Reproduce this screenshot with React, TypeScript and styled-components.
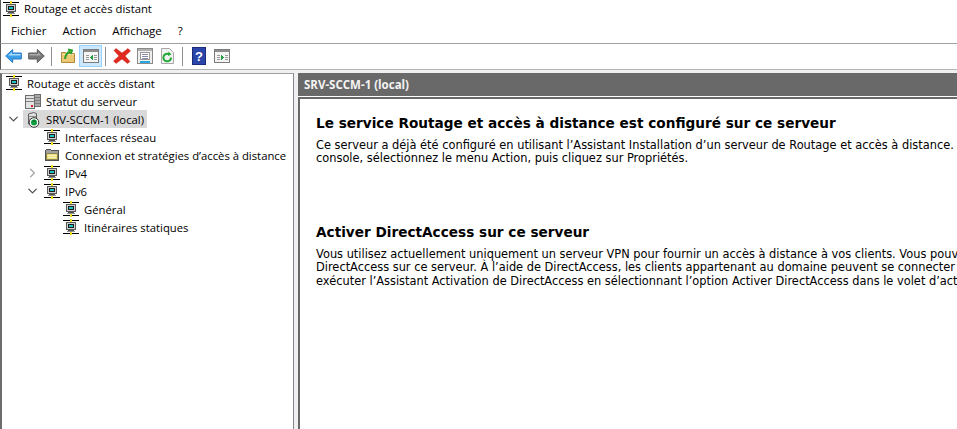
import React from 'react'
import styled, { createGlobalStyle } from 'styled-components'
import { ChevronDown, ChevronRight } from 'lucide-react'

const GlobalStyle = createGlobalStyle`
  html, body {
    margin: 0;
    padding: 0;
    background: #f0f0f0;
  }
  body {
    font-family: 'Open Sans', 'Noto Sans', sans-serif;
    color: #000;
    overflow: hidden;
  }
`

function NetworkIcon() {
  return (
    <svg width="16" height="16" viewBox="0 0 16 16" shapeRendering="crispEdges">
      <rect x="0" y="1" width="16" height="1" fill="#000" />
      <rect x="7" y="0" width="2" height="3" fill="#f0e020" />
      <rect x="3" y="3" width="10" height="8" fill="#d0d0d0" />
      <path d="M3.500 3.500h9v7h-9z" fill="none" stroke="#585858" />
      <path d="M5.500 5.500h5v3h-5z" fill="#20c4c4" stroke="#1c1c1c" />
      <rect x="5" y="11" width="6" height="1" fill="#505050" />
      <rect x="4" y="12" width="8" height="1" fill="#909090" />
      <rect x="0" y="14" width="16" height="1" fill="#000" />
      <rect x="7" y="13" width="2" height="3" fill="#f0e020" />
    </svg>
  )
}

function ServerStatusIcon() {
  return (
    <svg width="16" height="17" viewBox="0 0 16 17" shapeRendering="crispEdges">
      <path d="M0.500 2.500h9v13h-9z" fill="#e2e2e2" stroke="#6c6c6c" />
      <path d="M9.500 1.500h6v12h-6z" fill="#a8a8a8" stroke="#6c6c6c" />
      <path d="M1 5.500h8M1 8.500h8M10 4.500h5M10 7.500h5M10 10.500h5" stroke="#808080" />
      <rect x="6" y="12" width="2" height="2" fill="#d02020" />
    </svg>
  )
}

function LocalServerIcon() {
  return (
    <svg width="16" height="17" viewBox="0 0 16 17">
      <path d="M3.500 3l5-1.500 3 1V13h-8z" fill="#dedede" stroke="#606060" />
      <path d="M4 5.500h7M4 8h3" stroke="#8c8c8c" />
      <circle cx="9" cy="11.500" r="4.800" fill="#fff" stroke="#303030" />
      <circle cx="9" cy="11.500" r="3" fill="#0ea040" />
      <path d="M9 8.300l2.200 2.500H6.800z" fill="#0a7a30" />
    </svg>
  )
}

function FolderIcon() {
  return (
    <svg width="16" height="16" viewBox="0 0 16 16" shapeRendering="crispEdges">
      <path d="M1.500 3.500l1-1h4l1 1h7v10h-13z" fill="#a0a0a0" stroke="#505050" />
      <path d="M2.500 6.500h11v6h-11z" fill="#ece080" stroke="#8a8450" />
      <path d="M4 8.500h8M4 10.500h8" stroke="#f8f2c0" />
    </svg>
  )
}

function BackIcon() {
  return (
    <svg width="17" height="16" viewBox="0 0 17 16">
      <path d="M0.700 8l7-6.500V5h8.600v6H7.700v3.500z" fill="#3a9fe8" stroke="#2a78c0" />
      <path d="M3 7.500l4-3.500V6h8.500v1.500z" fill="#a8dcfa" />
    </svg>
  )
}

function ForwardIcon() {
  return (
    <svg width="17" height="16" viewBox="0 0 17 16">
      <path d="M16.300 8l-7-6.500V5H0.700v6h8.600v3.500z" fill="#787878" stroke="#5c5c5c" />
      <path d="M1.500 6h8.500V4l3 3.500H1.500z" fill="#acacac" />
    </svg>
  )
}

function UpFolderIcon() {
  return (
    <svg width="16" height="16" viewBox="0 0 16 16">
      <path d="M1.500 4.500h4l1 1h8v9h-13z" fill="#ecc873" stroke="#b08a3c" />
      <path d="M2 6.500h12" stroke="#f8e4ac" />
      <path d="M5 11C5.500 6.500 7.500 4.500 10 3.500M8 1.500L12 2.500l-1.500 3.500" fill="none" stroke="#2aa02a" strokeWidth="2" />
    </svg>
  )
}

function PaneIcon({ arrow }: { arrow: 'left' | 'right' }) {
  return (
    <svg width="16" height="16" viewBox="0 0 16 16" shapeRendering="crispEdges">
      <rect x="0.500" y="1.500" width="15" height="13" fill="#f4f4f4" stroke="#7c7c7c" />
      <rect x="1" y="2" width="14" height="2" fill="#8c8c8c" />
      <path d="M3 7h3M3 9h3M3 11h3M11 7h3M11 9h3M11 11h3" stroke="#9a9a9a" />
      {arrow === 'left' ? (
        <path d="M10 6v7L7 9.500z" fill="#20a040" />
      ) : (
        <path d="M7 6v7l3-3.500z" fill="#20a040" />
      )}
    </svg>
  )
}

function DeleteIcon() {
  return (
    <svg width="18" height="16" viewBox="0 0 18 16">
      <path d="M3 0.500l6 4.500 6-4.500 2.500 2.500-5.500 5 5 5.500-2.500 2-5.500-4.500-6 4.500-2.500-2.500 5.500-5-5-5.500z" fill="#e02a20" stroke="#c8241c" strokeWidth="0.500" />
    </svg>
  )
}

function PropertiesIcon() {
  return (
    <svg width="16" height="16" viewBox="0 0 16 16" shapeRendering="crispEdges">
      <rect x="0.500" y="0.500" width="15" height="15" fill="#eee" stroke="#8a8a8a" />
      <rect x="1" y="1" width="14" height="2" fill="#b0b0b0" />
      <rect x="3.500" y="4.500" width="9" height="7" fill="#fff" stroke="#9a9a9a" />
      <path d="M5 6.500h6M5 8.500h6M5 10.500h6" stroke="#8888aa" />
      <rect x="3" y="13" width="10" height="2" fill="#28a8e0" />
    </svg>
  )
}

function RefreshIcon() {
  return (
    <svg width="15" height="16" viewBox="0 0 15 16">
      <path d="M1.500 0.500h8l4 4v11h-12z" fill="#f2f2f2" stroke="#a8a8a8" />
      <path d="M11 9.500a3.800 3.800 0 1 1-1.800-3.200" fill="none" stroke="#22a838" strokeWidth="2" />
      <path d="M8.500 3.500l3 3-3.500 1.500z" fill="#22a838" />
    </svg>
  )
}

function HelpIcon() {
  return (
    <svg width="14" height="18" viewBox="0 0 14 18">
      <rect x="0.500" y="0.500" width="13" height="17" fill="#2c45a8" stroke="#1c2c78" />
      <text x="7" y="14" textAnchor="middle" fontSize="13" fontWeight="700" fontFamily="'Liberation Sans', sans-serif" fill="#fff">?</text>
    </svg>
  )
}

const Window = styled.div`
  width: 957px;
  height: 429px;
  display: flex;
  flex-direction: column;
  overflow: hidden;
  background: #f0f0f0;
`

const TitleBar = styled.div`
  height: 20px;
  background: #fff;
  border-left: 1px solid #5a5a5a;
  display: flex;
  align-items: center;
  gap: 5px;
  padding: 0 0 3px 2px;
  box-sizing: border-box;
  font-size: 11.3px;
`

const MenuBar = styled.div`
  height: 21px;
  background: #fff;
  border-left: 1px solid #5a5a5a;
  border-bottom: 1px solid #a0a0a0;
  display: flex;
  align-items: center;
  gap: 16px;
  padding: 0 0 2px 10px;
  font-size: 11.5px;
`

const MenuItem = styled.span``

const Toolbar = styled.div`
  height: 24px;
  background: #fff;
  border-left: 1px solid #5a5a5a;
  border-bottom: 1px solid #b4b4b4;
  display: flex;
  align-items: center;
  padding: 0 0 1px 1px;
`

const ToolButton = styled.div<{ $active?: boolean }>`
  width: 23px;
  height: 22px;
  box-sizing: border-box;
  display: flex;
  align-items: center;
  justify-content: center;
  background: ${(p) => (p.$active ? '#cce8ff' : 'transparent')};
  border: 1px solid ${(p) => (p.$active ? '#99d1ff' : 'transparent')};
`

const ToolSep = styled.div`
  width: 1px;
  height: 19px;
  background: #909090;
  margin: 0 4px 0 3px;
`

const Main = styled.div`
  flex: 1;
  min-height: 0;
  display: flex;
  padding-top: 3px;
  background: #f0f0f0;
`

const TreePane = styled.div`
  width: 294px;
  box-sizing: border-box;
  background: #fff;
  border-left: 2px solid #6d6d6d;
  border-top: 1px solid #a0a0a0;
  border-right: 1px solid #828790;
  flex-shrink: 0;
  font-size: 11.3px;
`

const TreeRow = styled.div<{ $level: number }>`
  height: 18px;
  display: flex;
  align-items: center;
  padding-left: ${(p) => (p.$level === 1 ? 2 : 4 + (p.$level - 2) * 19)}px;
`

const Caret = styled.span`
  width: 17px;
  height: 18px;
  flex-shrink: 0;
  display: flex;
  align-items: center;
  justify-content: center;
  padding-right: 2px;
  box-sizing: border-box;
  color: #505050;
`

const RowBody = styled.span<{ $selected?: boolean }>`
  height: 18px;
  display: flex;
  align-items: center;
  gap: 5px;
  padding: 0 3px 0 2px;
  white-space: nowrap;
  background: ${(p) => (p.$selected ? '#d9d9d9' : 'transparent')};
`

const Splitter = styled.div`
  width: 4px;
  flex-shrink: 0;
  background: #f0f0f0;
`

const DetailPane = styled.div`
  flex: 1;
  min-width: 0;
  display: flex;
  flex-direction: column;
  background: #fff;
  overflow: hidden;
`

const DetailHeader = styled.div`
  height: 23px;
  flex-shrink: 0;
  background: #696969;
  color: #f4f4f4;
  font-size: 11.5px;
  font-weight: 700;
  display: flex;
  align-items: center;
  padding-left: 6px;
`

const DetailBody = styled.div`
  flex: 1;
  border-top: 1px solid #fff;
  box-shadow: inset 0 2px 0 #696969, inset 2px 0 0 #696969;
  padding: 17px 0 0 18px;
  font-family: 'DejaVu Sans', Verdana, sans-serif;
`

const Heading = styled.h2<{ $spaced?: boolean }>`
  margin: ${(p) => (p.$spaced ? '57px 0 6px' : '0 0 6px')};
  font-size: 13.65px;
  line-height: 19px;
  font-weight: 700;
  white-space: nowrap;
`

const Line = styled.div`
  font-size: 11.4px;
  line-height: 13.4px;
  white-space: nowrap;
`

type TreeItem = {
  label: string
  level: number
  icon: React.ReactNode
  caret?: 'open' | 'closed'
  selected?: boolean
}

const treeItems: TreeItem[] = [
  { label: 'Routage et accès distant', level: 1, icon: <NetworkIcon /> },
  { label: 'Statut du serveur', level: 2, icon: <ServerStatusIcon /> },
  { label: 'SRV-SCCM-1 (local)', level: 2, icon: <LocalServerIcon />, caret: 'open', selected: true },
  { label: 'Interfaces réseau', level: 3, icon: <NetworkIcon /> },
  { label: 'Connexion et stratégies d’accès à distance', level: 3, icon: <FolderIcon /> },
  { label: 'IPv4', level: 3, icon: <NetworkIcon />, caret: 'closed' },
  { label: 'IPv6', level: 3, icon: <NetworkIcon />, caret: 'open' },
  { label: 'Général', level: 4, icon: <NetworkIcon /> },
  { label: 'Itinéraires statiques', level: 4, icon: <NetworkIcon /> },
]

export default function App() {
  return (
    <Window>
      <GlobalStyle />
      <TitleBar>
        <NetworkIcon />
        Routage et accès distant
      </TitleBar>
      <MenuBar>
        <MenuItem>Fichier</MenuItem>
        <MenuItem>Action</MenuItem>
        <MenuItem>Affichage</MenuItem>
        <MenuItem>?</MenuItem>
      </MenuBar>
      <Toolbar>
        <ToolButton><BackIcon /></ToolButton>
        <ToolButton><ForwardIcon /></ToolButton>
        <ToolSep />
        <ToolButton><UpFolderIcon /></ToolButton>
        <ToolButton $active><PaneIcon arrow="left" /></ToolButton>
        <ToolSep />
        <ToolButton><DeleteIcon /></ToolButton>
        <ToolButton><PropertiesIcon /></ToolButton>
        <ToolButton><RefreshIcon /></ToolButton>
        <ToolSep />
        <ToolButton><HelpIcon /></ToolButton>
        <ToolButton><PaneIcon arrow="right" /></ToolButton>
      </Toolbar>
      <Main>
        <TreePane>
          {treeItems.map((item) => (
            <TreeRow key={item.label} $level={item.level}>
              {item.level > 1 && (
                <Caret>
                  {item.caret === 'open' && <ChevronDown size={16} strokeWidth={2} />}
                  {item.caret === 'closed' && <ChevronRight size={16} strokeWidth={2} color="#a6a6a6" />}
                </Caret>
              )}
              <RowBody $selected={item.selected}>
                {item.icon}
                {item.label}
              </RowBody>
            </TreeRow>
          ))}
        </TreePane>
        <Splitter />
        <DetailPane>
          <DetailHeader>SRV-SCCM-1 (local)</DetailHeader>
          <DetailBody>
            <Heading>Le service Routage et accès à distance est configuré sur ce serveur</Heading>
            <Line>Ce serveur a déjà été configuré en utilisant l’Assistant Installation d’un serveur de Routage et accès à distance.</Line>
            <Line>console, sélectionnez le menu Action, puis cliquez sur Propriétés.</Line>
            <Heading $spaced>Activer DirectAccess sur ce serveur</Heading>
            <Line>Vous utilisez actuellement uniquement un serveur VPN pour fournir un accès à distance à vos clients. Vous pouvez</Line>
            <Line>DirectAccess sur ce serveur. À l’aide de DirectAccess, les clients appartenant au domaine peuvent se connecter à</Line>
            <Line>exécuter l’Assistant Activation de DirectAccess en sélectionnant l’option Activer DirectAccess dans le volet d’actions</Line>
          </DetailBody>
        </DetailPane>
      </Main>
    </Window>
  )
}
